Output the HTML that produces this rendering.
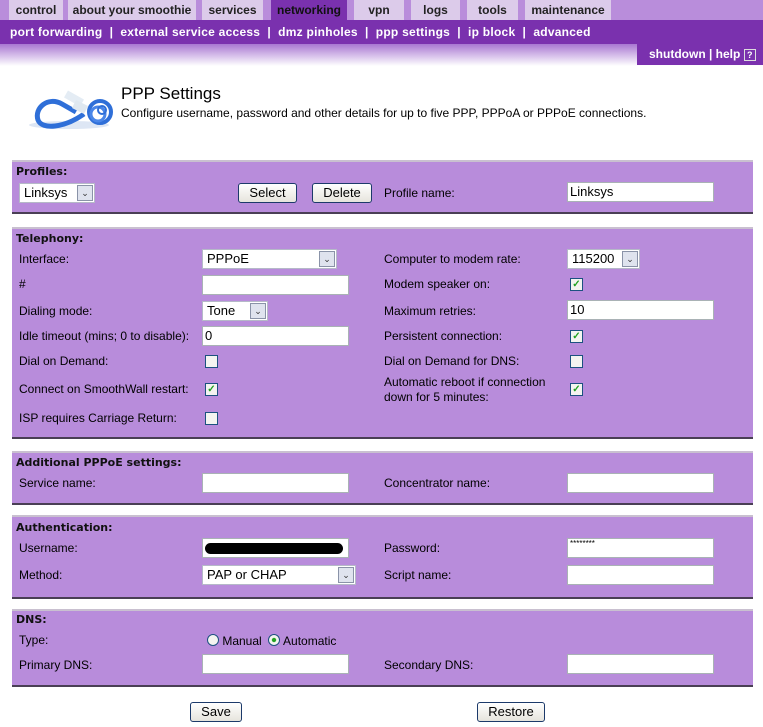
<!DOCTYPE html>
<html><head><meta charset="utf-8"><style>
body{margin:0;width:763px;height:727px;background:#fff;position:relative;overflow:hidden;font-family:"Liberation Sans",Arial,sans-serif;font-size:12px;color:#000}
.a{position:absolute;white-space:nowrap}
.tab{position:absolute;top:0;height:20px;background:#dccbea;font:bold 12px "Liberation Sans",sans-serif;color:#222;text-align:center;line-height:20px}
.sub{position:absolute;top:20px;left:0;width:763px;height:24px;background:#7a31ae;color:#fff;font:bold 12px "Liberation Sans",sans-serif;line-height:24px;letter-spacing:0.25px}
.panel{position:absolute;left:12px;width:741px;background:#b88cdb;border-top:2px solid #c9c0d0;border-bottom:2px solid #4a3f55}
.h{position:absolute;font:bold 11px "DejaVu Sans",sans-serif;color:#111}
.in{position:absolute;height:18px;background:#fff;border:1px solid #a9b2b5;font-size:13px;line-height:18px;padding-left:2px;box-sizing:content-box}
.sel{position:absolute;height:18px;background:#fff;border:1px solid #b5b9c8;font-size:13px;line-height:18px;padding-left:4px}
.sel i{position:absolute;right:1px;top:1px;width:14px;height:14px;border:1px solid #8a93a8;background:#dfe3ee;font-style:normal;font-size:9px;line-height:14px;text-align:center;color:#333}
.cb{position:absolute;width:11px;height:11px;border:1px solid #1c5180;background:#f4f4f0;font-size:10px;line-height:11px;text-align:center;color:#21a121;font-weight:bold}
.btn{position:absolute;height:18px;border:1px solid #1c3a6a;border-radius:3px;background:linear-gradient(#fff,#e6e4dc);font-size:13px;line-height:18px;text-align:center}
</style></head><body>
<div class="a" style="left:0;top:0;width:763px;height:20px;background:#b98ddb"></div>
<div class="tab" style="left:9px;width:54px">control</div>
<div class="tab" style="left:68px;width:128px">about your smoothie</div>
<div class="tab" style="left:202px;width:61px">services</div>
<div class="tab" style="left:271px;width:76px;background:#7a31ae;color:#111">networking</div>
<div class="tab" style="left:354px;width:50px">vpn</div>
<div class="tab" style="left:411px;width:49px">logs</div>
<div class="tab" style="left:467px;width:51px">tools</div>
<div class="tab" style="left:525px;width:86px">maintenance</div>
<div class="sub"><span style="margin-left:10px">port forwarding &nbsp;| &nbsp;external service access &nbsp;| &nbsp;dmz pinholes &nbsp;| &nbsp;ppp settings &nbsp;| &nbsp;ip block &nbsp;| &nbsp;advanced</span></div>
<div class="a" style="left:0;top:44px;width:763px;height:22px;background:linear-gradient(#a877d2,#fff)"></div>
<div class="a" style="left:637px;top:44px;width:126px;height:21px;background:#7a31ae;color:#fff;font-weight:bold;line-height:21px;padding-left:12px;box-sizing:border-box">shutdown | help <span style="display:inline-block;width:10px;height:10px;border:1px solid #ddd;font-size:9px;line-height:10px;text-align:center">?</span></div>
<svg class="a" style="left:14px;top:84px" width="100" height="50"><ellipse cx="55" cy="41" rx="40" ry="4" fill="#dde6f4"/><path d="M70 30 C50 44 28 46 24 36 C20 24 34 12 48 20 L62 28" stroke="#2f6fd8" stroke-width="5" fill="none"/><path d="M52 10 l16 9" stroke="#e4ecf4" stroke-width="8"/><path d="M60 20 l12 6" stroke="#dfe8f0" stroke-width="9"/><circle cx="86" cy="28" r="11" fill="none" stroke="#2f6fd8" stroke-width="4"/><circle cx="84" cy="30" r="7" fill="none" stroke="#4a86e8" stroke-width="3"/><circle cx="88" cy="26" r="4" fill="none" stroke="#2f6fd8" stroke-width="2"/></svg>
<div class="a" style="left:121px;top:84px;font-size:17px">PPP Settings</div>
<div class="a" style="left:121px;top:106px">Configure username, password and other details for up to five PPP, PPPoA or PPPoE connections.</div>

<div class="panel" style="top:160px;height:50px"></div>
<div class="panel" style="top:227px;height:208px"></div>
<div class="panel" style="top:451px;height:50px"></div>
<div class="panel" style="top:515px;height:80px"></div>
<div class="panel" style="top:609px;height:74px"></div>

<div class="h" style="left:16px;top:165px">Profiles:</div>
<div class="sel" style="left:19px;top:183px;width:70px">Linksys<i>&#8964;</i></div>
<div class="btn" style="left:238px;top:183px;width:57px">Select</div>
<div class="btn" style="left:312px;top:183px;width:58px">Delete</div>
<div class="a" style="left:384px;top:186px">Profile name:</div>
<div class="in" style="left:567px;top:182px;width:143px">Linksys</div>

<div class="h" style="left:16px;top:232px">Telephony:</div>
<div class="a" style="left:19px;top:252px">Interface:</div>
<div class="sel" style="left:202px;top:249px;width:129px">PPPoE<i>&#8964;</i></div>
<div class="a" style="left:19px;top:277px">#</div>
<div class="in" style="left:202px;top:275px;width:143px"></div>
<div class="a" style="left:19px;top:304px">Dialing mode:</div>
<div class="sel" style="left:202px;top:301px;width:60px">Tone<i>&#8964;</i></div>
<div class="a" style="left:19px;top:329px">Idle timeout (mins; 0 to disable):</div>
<div class="in" style="left:202px;top:326px;width:143px">0</div>
<div class="a" style="left:19px;top:354px">Dial on Demand:</div>
<div class="cb" style="left:205px;top:355px"></div>
<div class="a" style="left:19px;top:382px">Connect on SmoothWall restart:</div>
<div class="cb" style="left:205px;top:383px">&#10003;</div>
<div class="a" style="left:19px;top:411px">ISP requires Carriage Return:</div>
<div class="cb" style="left:205px;top:412px"></div>

<div class="a" style="left:384px;top:252px">Computer to modem rate:</div>
<div class="sel" style="left:567px;top:249px;width:67px">115200<i>&#8964;</i></div>
<div class="a" style="left:384px;top:277px">Modem speaker on:</div>
<div class="cb" style="left:570px;top:278px">&#10003;</div>
<div class="a" style="left:384px;top:304px">Maximum retries:</div>
<div class="in" style="left:567px;top:300px;width:143px">10</div>
<div class="a" style="left:384px;top:329px">Persistent connection:</div>
<div class="cb" style="left:570px;top:330px">&#10003;</div>
<div class="a" style="left:384px;top:354px">Dial on Demand for DNS:</div>
<div class="cb" style="left:570px;top:355px"></div>
<div class="a" style="left:384px;top:375px;line-height:15px">Automatic reboot if connection<br>down for 5 minutes:</div>
<div class="cb" style="left:570px;top:383px">&#10003;</div>

<div class="h" style="left:16px;top:456px">Additional PPPoE settings:</div>
<div class="a" style="left:19px;top:476px">Service name:</div>
<div class="in" style="left:202px;top:473px;width:143px"></div>
<div class="a" style="left:384px;top:476px">Concentrator name:</div>
<div class="in" style="left:567px;top:473px;width:143px"></div>

<div class="h" style="left:16px;top:521px">Authentication:</div>
<div class="a" style="left:19px;top:541px">Username:</div>
<div class="in" style="left:202px;top:538px;width:143px"><span style="display:inline-block;width:138px;height:11px;border-radius:6px;background:#000;margin-top:4px"></span></div>
<div class="a" style="left:384px;top:541px">Password:</div>
<div class="in" style="left:567px;top:538px;width:143px;font-size:8px;line-height:10px">********</div>
<div class="a" style="left:19px;top:568px">Method:</div>
<div class="sel" style="left:202px;top:565px;width:148px">PAP or CHAP<i>&#8964;</i></div>
<div class="a" style="left:384px;top:568px">Script name:</div>
<div class="in" style="left:567px;top:565px;width:143px"></div>

<div class="h" style="left:16px;top:613px">DNS:</div>
<div class="a" style="left:19px;top:633px">Type:</div>
<div class="a" style="left:207px;top:634px"><span style="display:inline-block;width:10px;height:10px;border:1px solid #1c5180;border-radius:50%;background:#f4f4f0;vertical-align:-1px"></span> Manual &nbsp;<span style="display:inline-block;width:10px;height:10px;border:1px solid #1c5180;border-radius:50%;background:radial-gradient(#21a121 25%,#f4f4f0 35%);vertical-align:-1px"></span> Automatic</div>
<div class="a" style="left:19px;top:658px">Primary DNS:</div>
<div class="in" style="left:202px;top:654px;width:143px"></div>
<div class="a" style="left:384px;top:658px">Secondary DNS:</div>
<div class="in" style="left:567px;top:654px;width:143px"></div>

<div class="btn" style="left:190px;top:702px;width:50px">Save</div>
<div class="btn" style="left:477px;top:702px;width:66px">Restore</div>
</body></html>
